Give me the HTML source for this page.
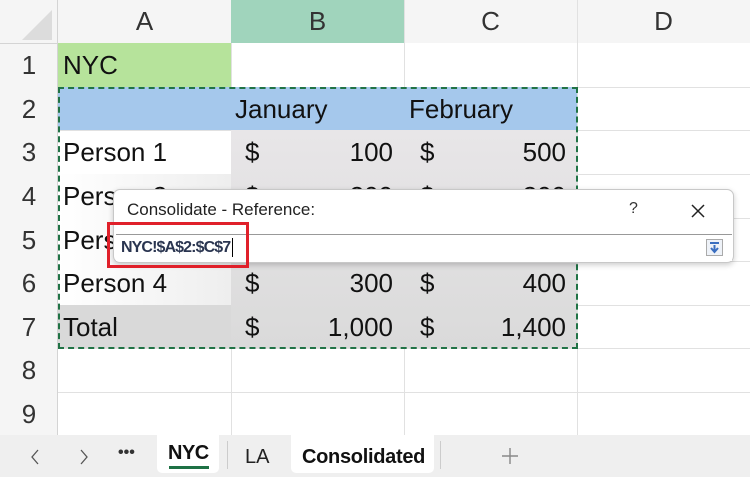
<!DOCTYPE html>
<html><head><meta charset="utf-8"><style>
*{margin:0;padding:0;box-sizing:border-box}
body{width:750px;height:477px;overflow:hidden;background:#fff;font-family:"Liberation Sans",sans-serif;position:relative;color:#111}
.a{position:absolute}
.hl{position:absolute;left:58px;width:692px;height:1px;background:#e1e1e1}
.vl{position:absolute;top:43px;width:1px;height:392px;background:#e1e1e1}
.t{position:absolute;font-size:26px;line-height:44px}
.rn{position:absolute;left:0;width:58px;text-align:center;font-size:26px;color:#333;line-height:44px}
.ch{position:absolute;top:0;height:43px;text-align:center;font-size:26px;color:#333;line-height:43px}
</style></head><body>
<div class="a" style="left:0;top:0;width:750px;height:43px;background:#f5f5f5"></div>
<div class="a" style="left:0;top:0;width:58px;height:435px;background:#f5f5f5"></div>
<div class="a" style="left:0;top:43px;width:58px;height:1px;background:#d4d4d4"></div>
<div class="a" style="left:57px;top:0;width:1px;height:435px;background:#d4d4d4"></div>
<svg class="a" style="left:18px;top:6px" width="36" height="36"><polygon points="34,4 34,34 4,34" fill="#dcdcdc"/></svg>
<div class="a" style="left:231px;top:0;width:173px;height:43px;background:#a0d4bc"></div>
<div class="ch" style="left:58px;width:173px">A</div>
<div class="ch" style="left:231px;width:173px">B</div>
<div class="ch" style="left:404px;width:173px">C</div>
<div class="ch" style="left:577px;width:173px">D</div>
<div class="a" style="left:404px;top:0;width:1px;height:43px;background:#e1e1e1"></div>
<div class="a" style="left:577px;top:0;width:1px;height:43px;background:#e1e1e1"></div>
<div class="hl" style="top:87px"></div><div class="hl" style="top:130px"></div><div class="hl" style="top:174px"></div>
<div class="hl" style="top:218px"></div><div class="hl" style="top:261px"></div><div class="hl" style="top:305px"></div>
<div class="hl" style="top:348px"></div><div class="hl" style="top:392px"></div>
<div class="vl" style="left:231px"></div><div class="vl" style="left:404px"></div><div class="vl" style="left:577px"></div>
<!-- fills -->
<div class="a" style="left:58px;top:43px;width:173px;height:44px;background:#b6e39b"></div>
<div class="a" style="left:58px;top:87px;width:519px;height:43px;background:#a5c8ec"></div>
<div class="a" style="left:231px;top:130px;width:346px;height:218px;background:linear-gradient(#e8e6e8,#dadada)"></div>
<div class="a" style="left:58px;top:174px;width:173px;height:131px;background:linear-gradient(90deg,#fff,#eee)"></div>
<div class="a" style="left:58px;top:305px;width:173px;height:43px;background:#d9d9d9"></div>
<div class="rn" style="top:43px">1</div><div class="rn" style="top:87px">2</div><div class="rn" style="top:130px">3</div>
<div class="rn" style="top:174px">4</div><div class="rn" style="top:218px">5</div><div class="rn" style="top:261px">6</div>
<div class="rn" style="top:305px">7</div><div class="rn" style="top:348px">8</div><div class="rn" style="top:392px">9</div>
<div class="a" style="left:58px;top:87px;width:520px;height:262px;border:2px dashed #217346"></div>
<div class="t" style="left:63px;top:43px">NYC</div>
<div class="t" style="left:235px;top:87px">January</div>
<div class="t" style="left:409px;top:87px">February</div>
<div class="t" style="left:63px;top:130px">Person 1</div>
<div class="t" style="left:63px;top:174px">Person 2</div>
<div class="t" style="left:63px;top:218px">Person 3</div>
<div class="t" style="left:63px;top:261px">Person 4</div>
<div class="t" style="left:63px;top:305px">Total</div>
<div class="t" style="left:245px;top:130px">$</div><div class="t" style="left:420px;top:130px">$</div>
<div class="t" style="left:245px;top:174px">$</div><div class="t" style="left:420px;top:174px">$</div>
<div class="t" style="left:245px;top:218px">$</div><div class="t" style="left:420px;top:218px">$</div>
<div class="t" style="left:245px;top:261px">$</div><div class="t" style="left:420px;top:261px">$</div>
<div class="t" style="left:245px;top:305px">$</div><div class="t" style="left:420px;top:305px">$</div>
<div class="t" style="right:357px;top:130px">100</div><div class="t" style="right:184px;top:130px">500</div>
<div class="t" style="right:357px;top:174px">200</div><div class="t" style="right:184px;top:174px">200</div>
<div class="t" style="right:357px;top:218px">200</div><div class="t" style="right:184px;top:218px">300</div>
<div class="t" style="right:357px;top:261px">300</div><div class="t" style="right:184px;top:261px">400</div>
<div class="t" style="right:357px;top:305px">1,000</div><div class="t" style="right:184px;top:305px">1,400</div>
<!-- dialog -->
<div class="a" style="left:113px;top:189px;width:621px;height:74px;background:#fff;border:1px solid #c8c8c8;border-radius:7px;box-shadow:0 2px 6px rgba(0,0,0,.2)"></div>
<div class="a" style="left:127px;top:200px;font-size:17px;color:#222">Consolidate - Reference:</div>
<div class="a" style="left:629px;top:200px;font-size:16px;color:#333">?</div>
<svg class="a" style="left:690px;top:203px" width="16" height="16"><path d="M2 2L14 14M14 2L2 14" stroke="#222" stroke-width="1.5"/></svg>
<div class="a" style="left:116px;top:234px;width:616px;height:27px;border-top:1px solid #999;background:#fff"></div>
<div class="a" style="left:121px;top:239px;font-size:16px;color:#2a3550;letter-spacing:-0.9px;font-weight:bold">NYC!$A$2:$C$7</div>
<div class="a" style="left:232px;top:238px;width:1px;height:19px;background:#000"></div>
<div class="a" style="left:706px;top:239px;width:17px;height:17px;border:1px solid #aaa;background:#eef2f8"></div>
<svg class="a" style="left:708px;top:241px" width="13" height="13"><rect x="2" y="1" width="9" height="2" fill="#3a6ec0"/><path d="M6.5 4v6M3 7l3.5 4 3.5-4" stroke="#3a6ec0" stroke-width="2" fill="none"/></svg>
<div class="a" style="left:107px;top:222px;width:142px;height:46px;border:3px solid #e0202a"></div>
<!-- tabs -->
<div class="a" style="left:0;top:435px;width:750px;height:42px;background:#efefef"></div>
<div class="a" style="left:157px;top:435px;width:62px;height:38px;background:#fff;border-radius:0 0 5px 5px"></div>
<div class="a" style="left:291px;top:435px;width:143px;height:38px;background:#fff;border-radius:0 0 5px 5px"></div>
<div class="a" style="left:227px;top:441px;width:1px;height:28px;background:#ccc"></div>
<div class="a" style="left:440px;top:441px;width:1px;height:28px;background:#ccc"></div>
<svg class="a" style="left:28px;top:447px" width="70" height="20"><path d="M10 3L4 10l6 7M53 3l6 7-6 7" stroke="#555" stroke-width="1.3" fill="none"/></svg>
<div class="a" style="left:118px;top:444px;font-size:16px;color:#333;font-weight:bold">•••</div>
<div class="a" style="left:168px;top:442px;font-size:20px;color:#111;font-weight:bold;letter-spacing:-0.5px">NYC</div>
<div class="a" style="left:169px;top:466px;width:40px;height:3px;background:#1e7145"></div>
<div class="a" style="left:245px;top:446px;font-size:20px;color:#222">LA</div>
<div class="a" style="left:302px;top:446px;font-size:20px;color:#111;font-weight:bold;letter-spacing:-0.3px">Consolidated</div>
<svg class="a" style="left:500px;top:446px" width="20" height="20"><path d="M10 2v16M2 10h16" stroke="#888" stroke-width="1.4"/></svg>
</body></html>
